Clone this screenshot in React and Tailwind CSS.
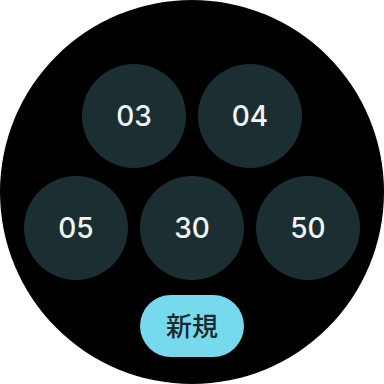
const rows = [
  ['03', '04'],
  ['05', '30', '50'],
];

function NumberButton({ label }) {
  return (
    <button className="flex h-[104px] w-[104px] items-center justify-center rounded-full bg-[#1b2e31] text-[28px] font-medium text-[#f1f5f5]">
      {label}
    </button>
  );
}

export default function App() {
  return (
    <div className="h-[384px] w-[384px] bg-white" style={{ fontFamily: 'Inter, "Noto Sans CJK JP", sans-serif' }}>
      <div className="flex h-[384px] w-[384px] flex-col items-center overflow-hidden rounded-full bg-black pt-[64px]">
        <div className="flex flex-col items-center gap-[8px]">
          {rows.map((row, i) => (
            <div key={i} className="flex gap-[12px]">
              {row.map((n) => (
                <NumberButton key={n} label={n} />
              ))}
            </div>
          ))}
        </div>
        <button className="mt-[15px] flex h-[62px] w-[104px] items-center justify-center rounded-full bg-[#76d9ec] text-[26px] font-medium text-[#1b2a2d]">
          新規
        </button>
      </div>
    </div>
  );
}
